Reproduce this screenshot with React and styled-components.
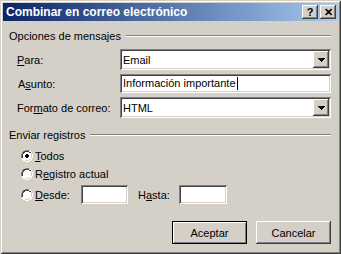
import React from "react";
import styled, { createGlobalStyle } from "styled-components";

const FACE = "#d4d0c8";
const SHADOW = "#808080";
const DARK = "#404040";

const GlobalStyle = createGlobalStyle`
  html, body {
    margin: 0;
    padding: 0;
    background: ${FACE};
  }
  * {
    box-sizing: border-box;
  }
`;

const Window = styled.div`
  width: 341px;
  height: 254px;
  padding: 3px;
  background: ${FACE};
  font-family: "Liberation Sans", Arial, sans-serif;
  font-size: 11px;
  color: #000;
  box-shadow: inset 1px 1px ${FACE}, inset -1px -1px ${DARK},
    inset 2px 2px #fff, inset -2px -2px ${SHADOW};
  display: flex;
  flex-direction: column;
`;

const TitleBar = styled.div`
  height: 18px;
  display: flex;
  align-items: center;
  padding: 0 2px 0 3px;
  background: linear-gradient(to right, #0a246a, #a6caf0);
`;

const Title = styled.div`
  flex: 1;
  color: #fff;
  font-weight: 700;
  font-size: 12px;
  white-space: nowrap;
`;

const CaptionButton = styled.div`
  width: 16px;
  height: 14px;
  margin-left: ${(p) => (p.$gap ? "2px" : "0")};
  background: ${FACE};
  box-shadow: inset -1px -1px ${DARK}, inset 1px 1px #fff,
    inset -2px -2px ${SHADOW};
  display: flex;
  align-items: center;
  justify-content: center;
  font-weight: 700;
  font-size: 11px;
  line-height: 1;
`;

const Body = styled.div`
  flex: 1;
  padding: 8px 7px 0 6px;
  display: flex;
  flex-direction: column;
`;

const GroupHeader = styled.div`
  display: flex;
  align-items: center;
  height: 13px;
  gap: 5px;
  margin-top: ${(p) => p.$top || 0}px;
`;

const Rule = styled.div`
  flex: 1;
  height: 2px;
  border-top: 1px solid ${SHADOW};
  border-bottom: 1px solid #fff;
`;

const FieldGrid = styled.div`
  display: grid;
  grid-template-columns: 103px 211px;
  grid-template-rows: 21px 19px 21px;
  row-gap: 4px;
  margin: 7px 0 0 8px;
  align-items: center;
`;

const Label = styled.label`
  white-space: nowrap;
  padding-left: ${(p) => p.$indent || 0}px;
`;

const Key = styled.span`
  text-decoration: underline;
`;

const Sunken = styled.div`
  height: 100%;
  background: #fff;
  box-shadow: inset 1px 1px ${SHADOW}, inset -1px -1px #fff,
    inset 2px 2px ${DARK}, inset -2px -2px ${FACE};
  display: flex;
  align-items: center;
  padding: 0 2px 0 3px;
  width: ${(p) => (p.$width ? `${p.$width}px` : "auto")};
`;

const Value = styled.span`
  flex: 1;
  white-space: nowrap;
`;

const Caret = styled.span`
  display: inline-block;
  width: 1px;
  height: 13px;
  background: #000;
  vertical-align: middle;
  margin-left: 1px;
`;

const DropButton = styled.div`
  width: 16px;
  height: 17px;
  background: ${FACE};
  box-shadow: inset -1px -1px ${DARK}, inset 1px 1px #fff,
    inset -2px -2px ${SHADOW}, inset 2px 2px ${FACE};
  display: flex;
  align-items: center;
  justify-content: center;
`;

const Options = styled.div`
  display: flex;
  flex-direction: column;
  gap: 5px;
  margin: 8px 0 0 12px;
`;

const OptionRow = styled.div`
  display: flex;
  align-items: center;
  height: ${(p) => p.$h || 13}px;
`;

const RadioText = styled.span`
  margin-left: ${(p) => p.$left ?? 2}px;
  white-space: nowrap;
  width: ${(p) => (p.$width ? `${p.$width}px` : "auto")};
`;

const Footer = styled.div`
  display: flex;
  justify-content: flex-end;
  gap: 9px;
  margin-top: 17px;
`;

const Button = styled.div`
  width: 75px;
  height: 23px;
  display: flex;
  align-items: center;
  justify-content: center;
  background: ${FACE};
  box-shadow: ${(p) =>
    p.$default
      ? `inset 0 0 0 1px #000, inset 1px 1px 0 1px #fff, inset -1px -1px 0 1px ${SHADOW}`
      : `inset -1px -1px ${DARK}, inset 1px 1px #fff, inset -2px -2px ${SHADOW}`};
`;

const Arrow = () => (
  <svg width="7" height="4" viewBox="0 0 7 4">
    <path d="M0 0h7v1h-1v1h-1v1h-1v1h-1v-1h-1v-1h-1v-1h-1z" fill="#000" />
  </svg>
);

const Radio = ({ checked }) => (
  <svg width="12" height="12" viewBox="0 0 12 12">
    <path d="M4 0h4v1h2v1h1v2h1v4h-1v2h-1v1h-2v1h-4v-1h-2v-1h-1v-2h-1v-4h1v-2h1v-1h2z" fill="#fff" />
    <path d="M4 0h4v1h-4v1h-2v2h-1v4h-1v-4h1v-2h1v-1h2z" fill={SHADOW} />
    <path d="M4 1h4v1h2v1h-2v-1h-4v1h-1v1h-1v4h-1v-4h1v-2h1v-1z" fill={DARK} />
    <path d="M10 3h1v5h-1v2h-2v1h-4v-1h4v-1h2z" fill={FACE} />
    <path d="M11 4h1v4h-1v2h-1v1h-2v1h-4v-1h4v-1h2v-1h1z" fill="#fff" />
    {checked && <path d="M5 4h2v1h1v2h-1v1h-2v-1h-1v-2h1z" fill="#000" />}
  </svg>
);

const Combo = ({ value }) => (
  <Sunken>
    <Value>{value}</Value>
    <DropButton>
      <Arrow />
    </DropButton>
  </Sunken>
);

export default function App() {
  return (
    <>
      <GlobalStyle />
      <Window>
        <TitleBar>
          <Title>Combinar en correo electrónico</Title>
          <CaptionButton>?</CaptionButton>
          <CaptionButton $gap>✕</CaptionButton>
        </TitleBar>
        <Body>
          <GroupHeader>
            <span>Opciones de mensajes</span>
            <Rule />
          </GroupHeader>
          <FieldGrid>
            <Label>
              <Key>P</Key>ara:
            </Label>
            <Combo value="Email" />
            <Label $indent={1}>
              A<Key>s</Key>unto:
            </Label>
            <Sunken>
              <Value>
                Información importante
                <Caret />
              </Value>
            </Sunken>
            <Label>
              For<Key>m</Key>ato de correo:
            </Label>
            <Combo value="HTML" />
          </FieldGrid>

          <GroupHeader $top={10}>
            <span>Enviar registros</span>
            <Rule />
          </GroupHeader>
          <Options>
            <OptionRow>
              <Radio checked />
              <RadioText>
                <Key>T</Key>odos
              </RadioText>
            </OptionRow>
            <OptionRow>
              <Radio />
              <RadioText>
                R<Key>e</Key>gistro actual
              </RadioText>
            </OptionRow>
            <OptionRow $h={19}>
              <Radio />
              <RadioText $width={46}>
                <Key>D</Key>esde:
              </RadioText>
              <Sunken $width={47} />
              <RadioText $width={41} $left={10}>
                H<Key>a</Key>sta:
              </RadioText>
              <Sunken $width={48} />
            </OptionRow>
          </Options>
          <Footer>
            <Button $default>Aceptar</Button>
            <Button>Cancelar</Button>
          </Footer>
        </Body>
      </Window>
    </>
  );
}
